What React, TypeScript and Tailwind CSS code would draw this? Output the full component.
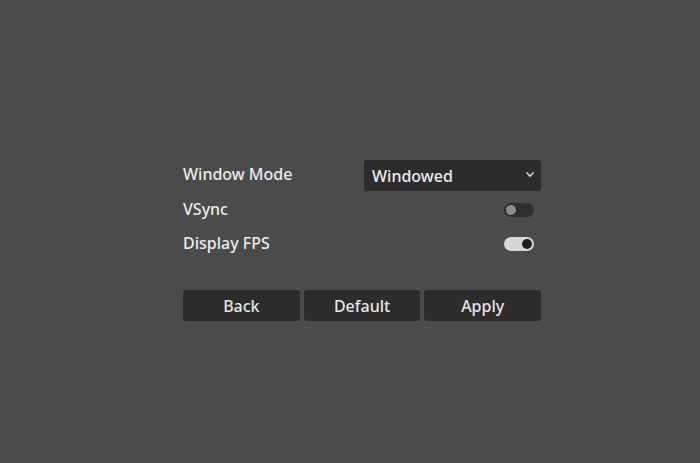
import React, { useState } from 'react';

const Toggle: React.FC<{ on: boolean; onChange: () => void }> = ({ on, onChange }) => (
  <button
    onClick={onChange}
    className={`flex items-center w-[30px] h-[14px] rounded-full px-[2px] mr-[7px] ${
      on ? 'bg-[#d6d6d6] justify-end' : 'bg-[#2f2f2f] justify-start'
    }`}
  >
    <span className={`block w-[10px] h-[10px] rounded-full ${on ? 'bg-[#1f1f1f]' : 'bg-[#8c8c8c]'}`} />
  </button>
);

const App: React.FC = () => {
  const [vsync, setVsync] = useState(false);
  const [showFps, setShowFps] = useState(true);

  return (
    <div className="w-[700px] h-[463px] bg-[#4b4b4b] pt-[160px] pl-[183px] font-['Noto_Sans',sans-serif] font-medium text-[#ececec]">
      <div className="w-[358px] flex flex-col gap-[3px]">
        <div className="flex items-center justify-between h-[31px]">
          <span className="text-[16px] mb-[3px]">Window Mode</span>
          <div className="flex items-center justify-between w-[177px] h-[31px] bg-[#2c2c2c] rounded-[3px] pl-[8px] pr-[6px]">
            <span className="text-[16px]">Windowed</span>
            <svg width="10" height="7" viewBox="0 0 10 7" className="mb-[2px]">
              <path d="M1.5 1.5 L5 5 L8.5 1.5" fill="none" stroke="#d0d0d0" strokeWidth="1.6" />
            </svg>
          </div>
        </div>
        <div className="flex items-center justify-between h-[31px]">
          <span className="text-[16px] mb-[2px]">VSync</span>
          <Toggle on={vsync} onChange={() => setVsync(!vsync)} />
        </div>
        <div className="flex items-center justify-between h-[31px]">
          <span className="text-[16px] mb-[2px]">Display FPS</span>
          <Toggle on={showFps} onChange={() => setShowFps(!showFps)} />
        </div>
        <div className="flex gap-[4px] mt-[28px]">
          {['Back', 'Default', 'Apply'].map((label) => (
            <button
              key={label}
              className="flex-1 h-[31px] bg-[#2c2c2c] rounded-[3px] text-[16px] font-medium text-[#e6e6e6] pt-[1px]"
            >
              {label}
            </button>
          ))}
        </div>
      </div>
    </div>
  );
};

export default App;
